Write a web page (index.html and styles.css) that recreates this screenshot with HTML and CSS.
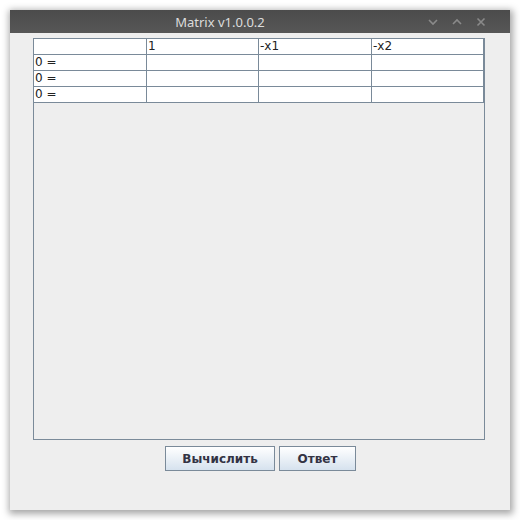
FILE: index.html
```html
<!DOCTYPE html>
<html>
<head>
<meta charset="utf-8">
<link rel="stylesheet" href="styles.css">
</head>
<body>
<div class="window">
  <div class="titlebar">
    <div class="title">Matrix v1.0.0.2</div>
    <div class="controls">
      <svg class="ctl" width="10" height="8" viewBox="0 0 10 8"><path d="M1 2 L5 6 L9 2" fill="none" stroke="#8a8a8a" stroke-width="1.6"/></svg>
      <svg class="ctl" width="10" height="8" viewBox="0 0 10 8"><path d="M1 6 L5 2 L9 6" fill="none" stroke="#8a8a8a" stroke-width="1.6"/></svg>
      <svg class="ctl" width="10" height="10" viewBox="0 0 10 10"><path d="M1.5 1.5 L8.5 8.5 M8.5 1.5 L1.5 8.5" fill="none" stroke="#8a8a8a" stroke-width="1.6"/></svg>
    </div>
  </div>
  <div class="content">
    <div class="scrollpane">
      <div class="grid">
        <div class="cell"></div><div class="cell">1</div><div class="cell">-x1</div><div class="cell">-x2</div>
        <div class="cell">0 =</div><div class="cell"></div><div class="cell"></div><div class="cell"></div>
        <div class="cell">0 =</div><div class="cell"></div><div class="cell"></div><div class="cell"></div>
        <div class="cell">0 =</div><div class="cell"></div><div class="cell"></div><div class="cell"></div>
      </div>
    </div>
    <div class="buttons">
      <button class="btn btn-calc">Вычислить</button>
      <button class="btn btn-ans">Ответ</button>
    </div>
  </div>
</div>
</body>
</html>
```
FILE: styles.css
```css
html, body {
  margin: 0;
  padding: 0;
  background: #ffffff;
}
body {
  width: 520px;
  height: 520px;
  overflow: hidden;
}
.window {
  margin: 10px;
  width: 500px;
  height: 500px;
  display: flex;
  flex-direction: column;
  background: #eeeeee;
  box-shadow: 1px 2px 7px 2px rgba(0,0,0,0.35);
}
.titlebar {
  height: 23px;
  flex: none;
  display: flex;
  align-items: center;
  background: linear-gradient(#4b4b4b, #575757);
}
.title {
  flex: 1;
  text-align: center;
  color: #dcdcdc;
  font-family: "Noto Sans", "DejaVu Sans", sans-serif;
  font-size: 13px;
  padding-top: 1px;
  padding-left: 2px;
}
.controls {
  display: flex;
  align-items: center;
  gap: 14px;
  width: 82px;
  padding-top: 1px;
}
.ctl { display: block; }
.content {
  flex: 1;
  display: flex;
  flex-direction: column;
  padding-top: 5px;
}
.scrollpane {
  height: 400px;
  width: 450px;
  margin-left: 23px;
  border: 1px solid #7a8a99;
  background: #eeeeee;
}
.grid {
  display: grid;
  grid-template-columns: 113px 112px 113px 112px;
  background: #ffffff;
}
.cell {
  height: 15px;
  border-right: 1px solid #7a8a99;
  border-bottom: 1px solid #7a8a99;
  font-family: "DejaVu Sans", sans-serif;
  font-size: 12px;
  line-height: 15px;
  color: #222;
  padding-left: 1px;
  white-space: nowrap;
  box-sizing: border-box;
  height: 16px;
}
.buttons {
  display: flex;
  justify-content: center;
  gap: 4px;
  margin-top: 6px;
  padding-left: 1px;
}
.btn {
  height: 25px;
  border: 1px solid #7a8a99;
  border-radius: 0;
  background: linear-gradient(#ffffff, #d6e2ee);
  font-family: "DejaVu Sans", sans-serif;
  font-weight: bold;
  font-size: 12px;
  color: #333344;
  padding: 0;
  margin: 0;
}
.btn-calc { width: 110px; }
.btn-ans { width: 77px; }
```
